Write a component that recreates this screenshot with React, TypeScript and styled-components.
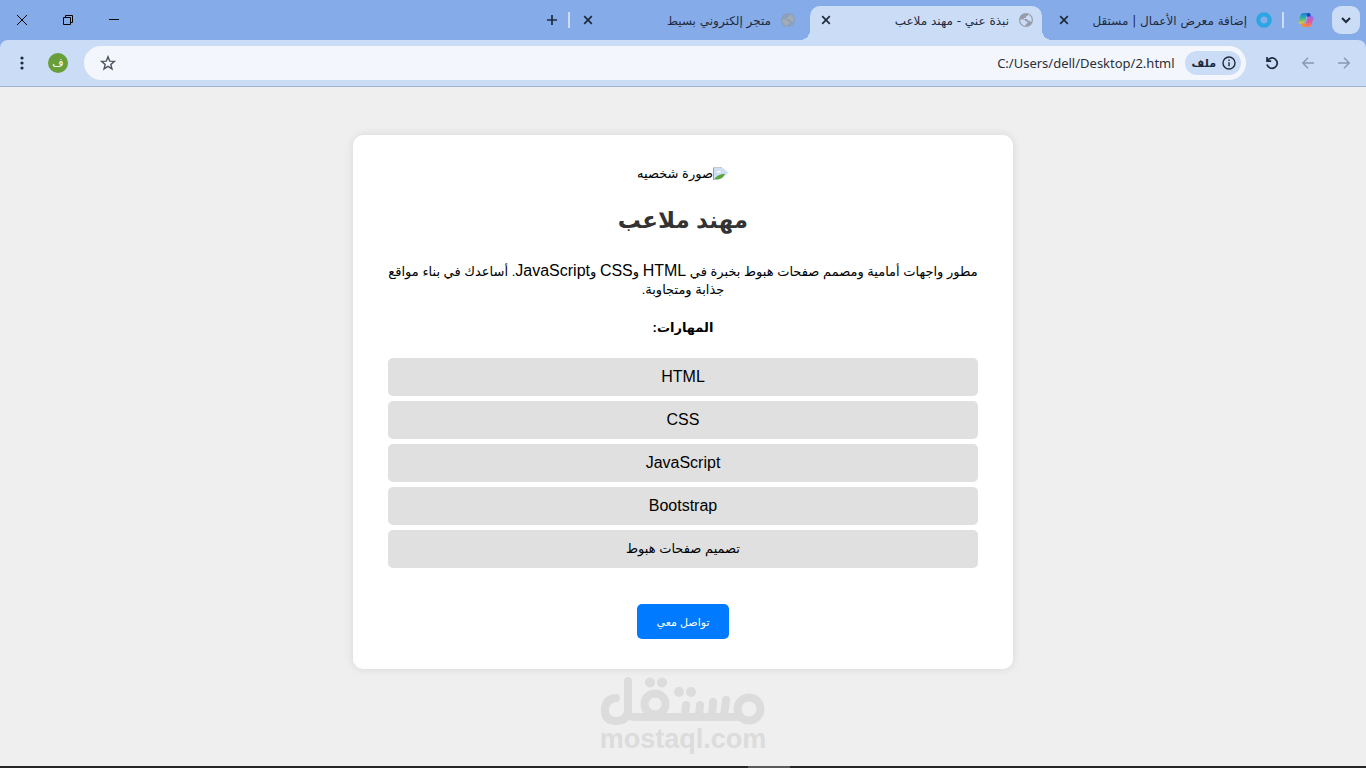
import React from "react";
import styled, { createGlobalStyle, css } from "styled-components";

const GlobalStyle = createGlobalStyle`
  *, *::before, *::after { box-sizing: border-box; }
  body {
    margin: 0;
    background: #efefef;
    font-family: "Liberation Sans", "DejaVu Sans", sans-serif;
    font-size: 16px;
    color: #000;
  }
  button, input { font-family: inherit; margin: 0; padding: 0; border: 0; background: none; color: inherit; }
  svg { display: block; flex: none; }
`;

const Shell = styled.div`
  min-height: 100vh;
  display: flex;
  flex-direction: column;
  overflow-x: hidden;
`;

/* Browser frame */

const TabStrip = styled.header`
  display: flex;
  align-items: flex-end;
  height: 40px;
  background: #85ace9;
  padding-inline: 6px 10px;
`;

const IconButton = styled.button<{ $w?: number; $h?: number; $dim?: boolean }>`
  flex: none;
  display: flex;
  align-items: center;
  justify-content: center;
  width: ${(p) => p.$w ?? 28}px;
  height: ${(p) => p.$h ?? 28}px;
  color: ${(p) => (p.$dim ? "#8a98b3" : "#1f2a3c")};
`;

const TabSearch = styled(IconButton)`
  align-self: center;
  border-radius: 9px;
  background: #cbdcf6;
`;

const Copilot = styled(IconButton)`
  align-self: center;
  margin-inline-start: 16px;
`;

const Divider = styled.span<{ $gap: number }>`
  flex: none;
  align-self: center;
  width: 2px;
  height: 16px;
  margin-inline-start: ${(p) => p.$gap}px;
  background: #cbdcf6;
`;

const Tabs = styled.nav`
  display: flex;
  gap: 6px;
  margin-inline-start: 2px;
  min-width: 0;
`;

const flare = css`
  content: "";
  position: absolute;
  bottom: 0;
  width: 10px;
  height: 10px;
`;

const Tab = styled.div<{ $active?: boolean }>`
  position: relative;
  display: flex;
  align-items: center;
  gap: 9px;
  flex: 0 1 232px;
  width: 232px;
  min-width: 0;
  height: 34px;
  padding: 0 8px 6px;
  border-radius: 10px 10px 0 0;
  ${(p) =>
    p.$active &&
    css`
      background: #cbdcf6;
      &::before {
        ${flare}
        left: -10px;
        background: radial-gradient(circle at 0 0, transparent 10px, #cbdcf6 10px);
      }
      &::after {
        ${flare}
        right: -10px;
        background: radial-gradient(circle at 100% 0, transparent 10px, #cbdcf6 10px);
      }
    `}
`;

const TabTitle = styled.a`
  flex: 1;
  min-width: 0;
  overflow: hidden;
  white-space: nowrap;
  padding-top: 2px;
  font-family: "DejaVu Sans", sans-serif;
  font-size: 12px;
  line-height: 20px;
  color: #1f2a3c;
  text-decoration: none;
`;

const WindowButtons = styled.div`
  display: flex;
  align-self: center;
  margin-inline-start: auto;
  gap: 22px;
`;

const ToolbarBack = styled.div`
  background: #85ace9;
`;

const Toolbar = styled.div`
  display: flex;
  align-items: center;
  height: 47px;
  padding-inline: 8px;
  background: #cbdcf6;
  border-bottom: 1px solid #9fb2cf;
  border-radius: 8px 8px 0 0;
`;

const NavGroup = styled.div`
  display: flex;
  gap: 8px;
`;

const Omnibox = styled.div`
  flex: 1;
  min-width: 0;
  display: flex;
  align-items: center;
  height: 34px;
  margin-inline: 12px 16px;
  padding-inline: 5px 10px;
  border-radius: 17px;
  background: #f3f7fd;
`;

const FileChip = styled.button`
  flex: none;
  display: flex;
  align-items: center;
  gap: 6px;
  height: 24px;
  padding-inline: 5px 7px;
  border-radius: 12px;
  background: #cbdcf6;
  color: #1f2a3c;
  font-family: "DejaVu Sans", sans-serif;
  font-size: 11px;
  font-weight: 700;
`;

const Address = styled.input`
  flex: 1;
  min-width: 0;
  margin-right: 10px;
  outline: 0;
  font-family: "Noto Sans", sans-serif;
  font-size: 13px;
  line-height: 20px;
  text-align: right;
  color: #2a2f38;
`;

const Avatar = styled.button`
  width: 20px;
  height: 20px;
  border-radius: 50%;
  background: #689f38;
  color: #fff;
  font-family: "DejaVu Sans", sans-serif;
  font-size: 11px;
  line-height: 16px;
`;

const Profile = styled.div`
  display: flex;
  align-items: center;
  gap: 12px;
`;

/* Page content */

const Page = styled.main`
  flex: 1;
  display: flex;
  flex-direction: column;
  align-items: center;
  padding: 48px 16px 0;
`;

const Card = styled.article`
  width: 100%;
  max-width: 660px;
  padding: 30px;
  border-radius: 10px;
  background: #fff;
  box-shadow: 0 0 10px rgba(0, 0, 0, 0.1);
  text-align: center;
`;

const Photo = styled.figure`
  display: flex;
  justify-content: center;
  margin: 0;
  height: 18px;
  align-items: center;
  font-size: 13px;
  line-height: 18px;
`;

const Name = styled.h1`
  margin: 18px 0 23px;
  font-size: 23px;
  line-height: 38px;
  color: #333;
`;

const Bio = styled.p`
  margin: 0;
  font-size: 13px;
  line-height: 18px;
`;

const Run = styled.span<{ $latin?: boolean }>`
  font-size: ${(p) => (p.$latin ? 16 : 13)}px;
`;

const SkillsTitle = styled.h3`
  margin: 19px 0 20px;
  font-size: 13px;
  line-height: 20px;
`;

const Skills = styled.ul`
  display: flex;
  flex-direction: column;
  gap: 5px;
  margin: 0 5px;
  padding: 0;
  list-style: none;
`;

const Skill = styled.li<{ $arabic?: boolean }>`
  height: 38px;
  border-radius: 5px;
  background: #e0e0e0;
  font-size: ${(p) => (p.$arabic ? 13 : 16)}px;
  line-height: 38px;
`;

const Contact = styled.button`
  display: block;
  width: 92px;
  height: 35px;
  margin: 36px auto 0;
  border-radius: 5px;
  background: #007bff;
  color: #fff;
  font-size: 11px;
  line-height: 34px;
`;

const Watermark = styled.footer`
  display: flex;
  flex-direction: column;
  align-items: center;
  padding: 8px 0 12px;
  font-size: 27px;
  font-weight: 700;
  line-height: 24px;
  color: #dcdcdc;
`;

const Taskbar = styled.div`
  display: flex;
  justify-content: center;
  height: 2px;
  background: #262626;
`;

const TaskbarItem = styled.span`
  width: 42px;
  margin-left: 172px;
  background: #5a5a5a;
`;

const CloseIcon = () => (
  <svg width="10" height="10" viewBox="0 0 10 10" fill="none" stroke="currentColor" strokeWidth="1.7">
    <path d="M1.2 1.2 8.8 8.8M8.8 1.2 1.2 8.8" />
  </svg>
);

const GlobeIcon = ({ muted }: { muted?: boolean }) => (
  <svg width="16" height="16" viewBox="0 0 16 16">
    <circle cx="8" cy="8" r="7" fill={muted ? "#8c9fbd" : "#969da8"} />
    <path
      d="M2.300 7.500H5.500Q7.500 7.500 7.500 9.500H9.500V11.300L7.800 12V13.800Q3.300 13.500 2.300 9zM9.800 2.400V3.700L8 4.600V6H5.800V7L8.500 6.900Q10 7 10 8.800H11.800L13 10.500Q15 6 11.500 3.300z"
      fill={muted ? "#a3acb5" : "#cbdcf6"}
    />
  </svg>
);

const RingIcon = () => (
  <svg width="16" height="16" viewBox="0 0 16 16">
    <circle cx="8" cy="8" r="5.700" fill="none" stroke="#2ba6e3" strokeWidth="4.200" />
  </svg>
);

const CopilotIcon = () => (
  <svg width="16" height="16" viewBox="0 0 16 16">
    <defs>
      <linearGradient id="cpLeft" x1="0" y1="0" x2="0" y2="1">
        <stop offset="0" stopColor="#1a7fe0" />
        <stop offset=".5" stopColor="#38b59a" />
        <stop offset="1" stopColor="#f0cb2c" />
      </linearGradient>
      <linearGradient id="cpRight" x1="0" y1="0" x2="0" y2="1">
        <stop offset="0" stopColor="#9a6be8" />
        <stop offset=".5" stopColor="#e0589f" />
        <stop offset="1" stopColor="#f6884a" />
      </linearGradient>
    </defs>
    <path d="M8.500 1h2.300q1.200 0 1.600 1.300L13.200 5H9.500L8 3z" fill="#2148b8" />
    <path d="M5.600 1H10Q9 1.500 8.600 3L6.800 9.500Q6.200 11.700 4.300 11.700H2.200Q0 11.700.7 9.200L2.500 3.300Q3.200 1 5.600 1z" fill="url(#cpLeft)" />
    <path d="M7.500 15H5.400Q4.200 15 3.800 13.700L3.200 11.500H6.500L8 13z" fill="#f08a3c" />
    <path d="M10.400 15H6Q7 14.500 7.400 13L9.200 6.500Q9.800 4.300 11.700 4.300h2.100Q16 4.300 15.300 6.800l-1.800 5.900Q12.800 15 10.400 15z" fill="url(#cpRight)" />
  </svg>
);

const BrokenImageIcon = () => (
  <svg width="16" height="16" viewBox="0 0 16 16">
    <path d="M1 2H10L15.500 7 5 13.500H1z" fill="#cfdef3" />
    <path d="M3.500 6.500q.5-2 2.200-1.200 1.800-1.300 2.300 1.200z" fill="#fff" />
    <path d="M1 13.500Q4 8.500 12 7.800 10.500 13 4 13.500z" fill="#5ba63c" />
    <path d="M.5 1.500V14" stroke="#9aa3ad" />
    <path d="M1 1.500H9" stroke="#c3cad3" />
  </svg>
);

const MostaqlMark = () => (
  <svg width="166" height="50" viewBox="0 0 166 50" fill="none" stroke="#dcdcdc" strokeWidth="8" strokeLinecap="round">
    <path d="M16 21Q5 22 5 33 5 44 16 44 28 44 28 32V4M28 38Q30 40 36 40H139" />
    <circle cx="55" cy="27" r="10.500" />
    <circle cx="149" cy="32" r="11.500" />
    <path d="M85 39 86 28M99 39 100 28M112 39 113 25M124 39 126 23" />
    <g fill="#dcdcdc" stroke="none">
      <circle cx="50" cy="5.500" r="5" />
      <circle cx="62" cy="5.500" r="5" />
      <circle cx="79" cy="15" r="5" />
      <circle cx="91" cy="15" r="5" />
    </g>
  </svg>
);

const tabs = [
  { title: "إضافة معرض الأعمال | مستقل", icon: <RingIcon /> },
  { title: "نبذة عني - مهند ملاعب", icon: <GlobeIcon />, active: true },
  { title: "متجر إلكتروني بسيط", icon: <GlobeIcon muted /> },
];

const skills = [
  { label: "HTML" },
  { label: "CSS" },
  { label: "JavaScript" },
  { label: "Bootstrap" },
  { label: "تصميم صفحات هبوط", arabic: true },
];

const bio = [
  { text: "مطور واجهات أمامية ومصمم صفحات هبوط بخبرة في " },
  { text: "HTML", latin: true },
  { text: " و" },
  { text: "CSS", latin: true },
  { text: " و" },
  { text: "JavaScript", latin: true },
  { text: ". أساعدك في بناء مواقع " },
  { text: "جذابة ومتجاوبة." },
];

export default function App() {
  return (
    <Shell dir="rtl" lang="ar">
      <GlobalStyle />
      <TabStrip>
        <TabSearch aria-label="البحث في علامات التبويب">
          <svg width="10" height="8" viewBox="0 0 10 8" fill="none" stroke="currentColor" strokeWidth="2">
            <path d="M1 2 5 6 9 2" />
          </svg>
        </TabSearch>
        <Copilot aria-label="Copilot" $w={20}>
          <CopilotIcon />
        </Copilot>
        <Divider $gap={12} />
        <Tabs>
          {tabs.map((t) => (
            <Tab key={t.title} $active={t.active}>
              {t.icon}
              <TabTitle href="#">{t.title}</TabTitle>
              <IconButton $w={16} $h={16} aria-label="إغلاق علامة التبويب">
                <CloseIcon />
              </IconButton>
            </Tab>
          ))}
        </Tabs>
        <Divider $gap={2} />
        <IconButton aria-label="علامة تبويب جديدة" $w={32} $h={40}>
          <svg width="12" height="12" viewBox="0 0 12 12" fill="none" stroke="currentColor" strokeWidth="1.700">
            <path d="M6 1v10M1 6h10" />
          </svg>
        </IconButton>
        <WindowButtons>
          <IconButton $w={24} aria-label="تصغير">
            <svg width="10" height="10" viewBox="0 0 10 10" fill="#000">
              <path d="M0 4h10v1H0z" />
            </svg>
          </IconButton>
          <IconButton $w={24} aria-label="استعادة">
            <svg width="10" height="10" viewBox="0 0 10 10" fill="none" stroke="#000">
              <path d="M.5 2.500h7v7h-7zM2.500 2.500v-2h7v7h-2" />
            </svg>
          </IconButton>
          <IconButton $w={24} aria-label="إغلاق">
            <svg width="10" height="10" viewBox="0 0 10 10" fill="none" stroke="#000">
              <path d="M0 0 10 10M10 0 0 10" />
            </svg>
          </IconButton>
        </WindowButtons>
      </TabStrip>
      <ToolbarBack>
        <Toolbar>
          <NavGroup>
            <IconButton $dim aria-label="رجوع">
              <svg width="12" height="12" viewBox="0 0 12 12" fill="none" stroke="currentColor" strokeWidth="1.500">
                <path d="M0 6h11M6 .8 11.200 6 6 11.200" />
              </svg>
            </IconButton>
            <IconButton $dim aria-label="تقدم">
              <svg width="12" height="12" viewBox="0 0 12 12" fill="none" stroke="currentColor" strokeWidth="1.500">
                <path d="M12 6H1M6 .8 .8 6 6 11.200" />
              </svg>
            </IconButton>
            <IconButton aria-label="إعادة تحميل">
              <svg width="14" height="14" viewBox="0 0 14 14" fill="none" stroke="currentColor" strokeWidth="1.700">
                <path d="M2 1v4.200h4.200M2.300 5A5.200 5.200 0 1 1 2 8.500" />
              </svg>
            </IconButton>
          </NavGroup>
          <Omnibox>
            <FileChip>
              <svg width="14" height="14" viewBox="0 0 14 14" fill="none" stroke="currentColor" strokeWidth="1.400">
                <circle cx="7" cy="7" r="6" />
                <path d="M7 6.200v4M7 3.500v1.500" />
              </svg>
              ملف
            </FileChip>
            <Address dir="ltr" aria-label="شريط العناوين" defaultValue="C:/Users/dell/Desktop/2.html" />
            <IconButton aria-label="إضافة إشارة مرجعية">
              <svg width="16" height="16" viewBox="0 0 16 16" fill="none" stroke="#4c535e" strokeWidth="1.400">
                <path d="m8 1.800 1.700 4.300 4.700.3-3.600 3 1.200 4.500L8 11.400l-4 2.500 1.200-4.500-3.600-3 4.700-.3z" />
              </svg>
            </IconButton>
          </Omnibox>
          <Profile>
            <Avatar aria-label="الملف الشخصي">ف</Avatar>
            <IconButton aria-label="القائمة">
              <svg width="4" height="14" viewBox="0 0 4 14" fill="currentColor">
                <circle cx="2" cy="2" r="1.600" />
                <circle cx="2" cy="7" r="1.600" />
                <circle cx="2" cy="12" r="1.600" />
              </svg>
            </IconButton>
          </Profile>
        </Toolbar>
      </ToolbarBack>
      <Page>
        <Card>
          <Photo>
            <BrokenImageIcon />
            <figcaption>صورة شخصيه</figcaption>
          </Photo>
          <Name>مهند ملاعب</Name>
          <Bio>
            {bio.map((part, i) => (
              <Run key={i} $latin={part.latin}>
                {part.text}
              </Run>
            ))}
          </Bio>
          <SkillsTitle>المهارات:</SkillsTitle>
          <Skills>
            {skills.map((s) => (
              <Skill key={s.label} $arabic={s.arabic}>
                {s.label}
              </Skill>
            ))}
          </Skills>
          <Contact>تواصل معي</Contact>
        </Card>
        <Watermark dir="ltr">
          <MostaqlMark />
          mostaql.com
        </Watermark>
      </Page>
      <Taskbar dir="ltr">
        <TaskbarItem />
      </Taskbar>
    </Shell>
  );
}
